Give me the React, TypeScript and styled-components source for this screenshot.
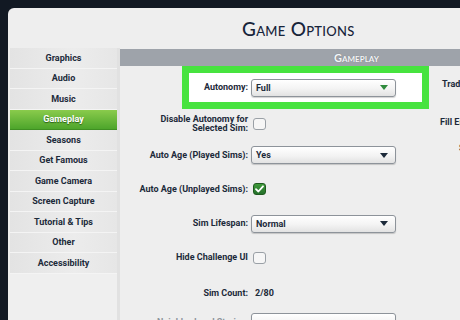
import styled, { createGlobalStyle } from "styled-components";

const GlobalStyle = createGlobalStyle`
  html, body {
    margin: 0;
    padding: 0;
    background: #121923;
    overflow: hidden;
  }
  #root {
    width: 460px;
    height: 320px;
  }
`;

const Screen = styled.div`
  width: 460px;
  height: 320px;
  box-sizing: border-box;
  padding: 8px 0 0 8px;
  overflow: hidden;
  background: #121923;
`;

const Window = styled.div`
  width: 452px;
  height: 312px;
  box-sizing: border-box;
  padding-left: 2px;
  background: #eeeeee;
  border-top-left-radius: 6px;
  display: flex;
  flex-direction: column;
  overflow: hidden;
`;

const TitleBar = styled.div`
  height: 40px;
  flex-shrink: 0;
  display: flex;
  align-items: center;
  padding-left: 232px;
`;

const Title = styled.h1`
  margin: 0;
  font-family: "Lato", "Liberation Sans", sans-serif;
  font-variant: small-caps;
  font-weight: 500;
  font-size: 19px;
  letter-spacing: 0.3px;
  color: #17243a;
`;

const Body = styled.div`
  flex: 1;
  display: flex;
  min-height: 0;
`;

const Sidebar = styled.nav`
  width: 110px;
  flex-shrink: 0;
  box-sizing: border-box;
  border-right: 3px solid #e1e1e1;
  background: #efefef;
  display: flex;
  flex-direction: column;
`;

const NavItem = styled.div<{ $active?: boolean }>`
  height: 20.5px;
  flex-shrink: 0;
  display: flex;
  align-items: center;
  justify-content: center;
  font-family: Roboto, "Liberation Sans", sans-serif;
  font-weight: 700;
  font-size: 9px;
  color: ${({ $active }) => ($active ? "#ffffff" : "#1c2a3a")};
  text-shadow: ${({ $active }) =>
    $active ? "0 1px 1px rgba(20, 60, 10, 0.7)" : "none"};
  background: ${({ $active }) =>
    $active
      ? "linear-gradient(#8acb4c, #4da52b)"
      : "linear-gradient(to right, #e3e3e3, #ececec 60%, #e6e6e6)"};
  border-bottom: 1px solid ${({ $active }) => ($active ? "#3f8f22" : "#f4f4f4")};
  box-sizing: border-box;
`;

const Main = styled.section`
  flex: 1;
  display: flex;
  flex-direction: column;
  min-width: 0;
`;

const SectionHeader = styled.div`
  margin-top: 1px;
  height: 17px;
  flex-shrink: 0;
  background: #9ea3aa;
  display: flex;
  align-items: center;
  padding-left: 214px;
  font-family: "Lato", "Liberation Sans", sans-serif;
  font-variant: small-caps;
  font-weight: 700;
  font-size: 11px;
  color: #f4f6f8;
  text-shadow: 0 0 1px rgba(0, 0, 0, 0.3);
`;

const Content = styled.div`
  flex: 1;
  display: flex;
  overflow: hidden;
`;

const FormCol = styled.div`
  width: 310px;
  flex-shrink: 0;
  display: flex;
  flex-direction: column;
`;

const SideCol = styled.div`
  flex: 1;
  display: flex;
  flex-direction: column;
  white-space: nowrap;
`;

const SideLabel = styled.div<{ $mt: number; $indent: number }>`
  height: 16px;
  flex-shrink: 0;
  margin-top: ${({ $mt }) => $mt}px;
  padding-left: ${({ $indent }) => $indent}px;
  display: flex;
  align-items: center;
  font-family: Roboto, "Liberation Sans", sans-serif;
  font-weight: 700;
  font-size: 9px;
  color: #1c2a3a;
`;

const Highlight = styled.div`
  margin-left: 62px;
  width: 247px;
  height: 43px;
  flex-shrink: 0;
  box-sizing: border-box;
  border: 7px solid #47e33f;
  background: #ffffff;
  display: flex;
  align-items: center;
  gap: 3px;
`;

const Row = styled.div<{ $h: number }>`
  height: ${({ $h }) => $h}px;
  display: flex;
  align-items: center;
  gap: 3px;
  flex-shrink: 0;
`;

const Label = styled.div<{ $w?: number; $muted?: boolean }>`
  width: ${({ $w }) => $w ?? 128}px;
  flex-shrink: 0;
  text-align: right;
  font-family: Roboto, "Liberation Sans", sans-serif;
  font-weight: 700;
  font-size: 9px;
  line-height: 9px;
  color: ${({ $muted }) => ($muted ? "#8c939b" : "#1c2a3a")};
`;

const Value = styled.div`
  padding-left: 4px;
  font-family: Roboto, "Liberation Sans", sans-serif;
  font-weight: 700;
  font-size: 9px;
  color: #1c2a3a;
`;

const Select = styled.div`
  width: 145px;
  height: 18px;
  flex-shrink: 0;
  box-sizing: border-box;
  border: 1px solid #8d939a;
  border-radius: 3px;
  background: linear-gradient(#ffffff, #f3f3f3 55%, #e2e2e2);
  box-shadow: 0 1px 1px rgba(0, 0, 0, 0.18);
  display: flex;
  align-items: center;
  justify-content: space-between;
  padding: 0 7px 0 4px;
  font-family: Roboto, "Liberation Sans", sans-serif;
  font-weight: 700;
  font-size: 9px;
  color: #1c2a3a;
`;

const Caret = styled.span<{ $color: string }>`
  width: 0;
  height: 0;
  border-left: 4.5px solid transparent;
  border-right: 4.5px solid transparent;
  border-top: 5px solid ${({ $color }) => $color};
`;

const Check = styled.div<{ $on?: boolean }>`
  margin-left: 2px;
  width: 13px;
  height: 12px;
  box-sizing: border-box;
  border-radius: 3px;
  border: 1px solid ${({ $on }) => ($on ? "#1f5a1f" : "#9aa0a6")};
  background: ${({ $on }) => ($on ? "linear-gradient(#3f9a3a, #24702a)" : "#f6f6f6")};
  display: flex;
  align-items: center;
  justify-content: center;
`;

const navItems = [
  "Graphics",
  "Audio",
  "Music",
  "Gameplay",
  "Seasons",
  "Get Famous",
  "Game Camera",
  "Screen Capture",
  "Tutorial & Tips",
  "Other",
  "Accessibility",
];

const Dropdown = ({ value, accent = "#1c2a3a" }: { value: string; accent?: string }) => (
  <Select>
    <span>{value}</span>
    <Caret $color={accent} />
  </Select>
);

const CheckBox = ({ on }: { on?: boolean }) => (
  <Check $on={on}>
    {on && (
      <svg width="9" height="8" viewBox="0 0 9 8">
        <path
          d="M1 4.2 L3.4 6.5 L8 1.3"
          fill="none"
          stroke="#ffffff"
          strokeWidth="1.8"
          strokeLinecap="round"
          strokeLinejoin="round"
        />
      </svg>
    )}
  </Check>
);

export default function App() {
  return (
    <>
      <GlobalStyle />
      <Screen>
        <Window>
          <TitleBar>
            <Title>Game Options</Title>
          </TitleBar>
          <Body>
            <Sidebar>
              {navItems.map((item) => (
                <NavItem key={item} $active={item === "Gameplay"}>
                  {item}
                </NavItem>
              ))}
            </Sidebar>
            <Main>
              <SectionHeader>Gameplay</SectionHeader>
              <Content>
                <FormCol>
                  <Highlight>
                    <Label $w={59}>Autonomy:</Label>
                    <Dropdown value="Full" accent="#2f8a3c" />
                  </Highlight>
                  <Row $h={29}>
                    <Label>
                      Disable Autonomy for
                      <br />
                      Selected Sim:
                    </Label>
                    <CheckBox />
                  </Row>
                  <Row $h={34}>
                    <Label>Auto Age (Played Sims):</Label>
                    <Dropdown value="Yes" />
                  </Row>
                  <Row $h={34}>
                    <Label>Auto Age (Unplayed Sims):</Label>
                    <CheckBox on />
                  </Row>
                  <Row $h={35}>
                    <Label>Sim Lifespan:</Label>
                    <Dropdown value="Normal" />
                  </Row>
                  <Row $h={33}>
                    <Label>Hide Challenge UI</Label>
                    <CheckBox />
                  </Row>
                  <Row $h={38}>
                    <Label>Sim Count:</Label>
                    <Value>2/80</Value>
                  </Row>
                  <Row $h={20}>
                    <Label $muted>Neighborhood Stories:</Label>
                    <Dropdown value="" />
                  </Row>
                </FormCol>
                <SideCol>
                  <SideLabel $mt={10} $indent={12}>Trade Requests:</SideLabel>
                  <SideLabel $mt={22} $indent={10}>Fill Empty Lots:</SideLabel>
                  <SideLabel $mt={10} $indent={29}>Spoilers:</SideLabel>
                </SideCol>
              </Content>
            </Main>
          </Body>
        </Window>
      </Screen>
    </>
  );
}
